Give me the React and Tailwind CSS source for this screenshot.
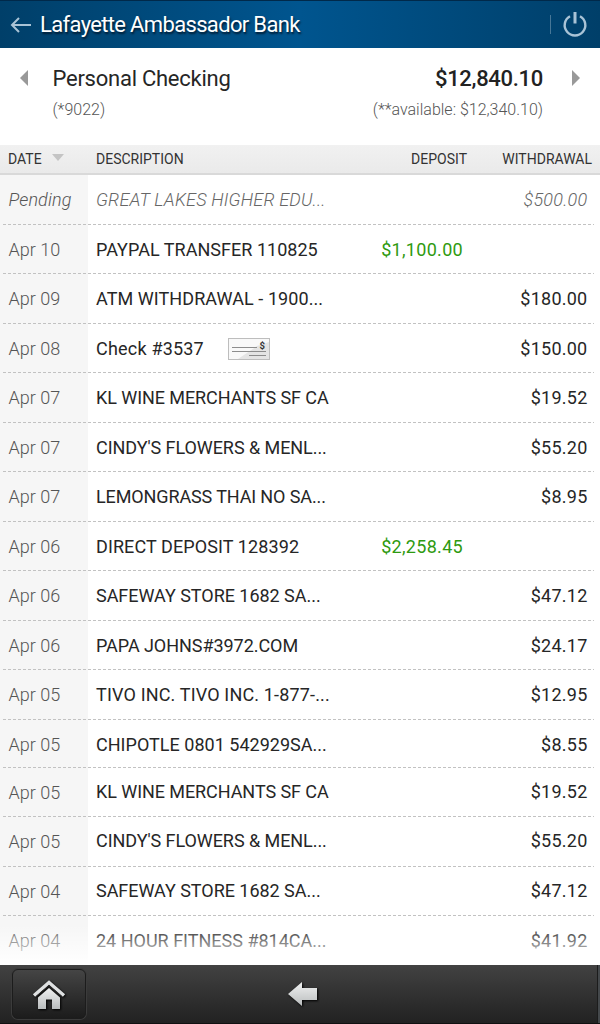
import React from "react";

const transactions = [
  { date: "Pending", text: "GREAT LAKES HIGHER EDU...", out: "$500.00", pending: true, ls: "tracking-[0.18px]" },
  { date: "Apr 10", text: "PAYPAL TRANSFER 110825", deposit: "$1,100.00", ls: "tracking-[0.03px]" },
  { date: "Apr 09", text: "ATM WITHDRAWAL - 1900...", out: "$180.00", ls: "tracking-[0.07px]" },
  { date: "Apr 08", text: "Check #3537", out: "$150.00", check: true, ls: "tracking-[0.2px]" },
  { date: "Apr 07", text: "KL WINE MERCHANTS SF CA", out: "$19.52", ls: "tracking-[-0.07px]" },
  { date: "Apr 07", text: "CINDY'S FLOWERS & MENL...", out: "$55.20", ls: "tracking-[-0.06px]" },
  { date: "Apr 07", text: "LEMONGRASS THAI NO SA...", out: "$8.95", ls: "tracking-[-0.12px]" },
  { date: "Apr 06", text: "DIRECT DEPOSIT 128392", deposit: "$2,258.45", ls: "tracking-[0.1px]" },
  { date: "Apr 06", text: "SAFEWAY STORE 1682 SA...", out: "$47.12", ls: "tracking-[-0.03px]" },
  { date: "Apr 06", text: "PAPA JOHNS#3972.COM", out: "$24.17", ls: "tracking-[-0.05px]" },
  { date: "Apr 05", text: "TIVO INC. TIVO INC. 1-877-...", out: "$12.95", ls: "tracking-[0.16px]" },
  { date: "Apr 05", text: "CHIPOTLE 0801 542929SA...", out: "$8.55", h: "h-[48.5px]", ls: "tracking-[0.02px]" },
  { date: "Apr 05", text: "KL WINE MERCHANTS SF CA", out: "$19.52", h: "h-[49px]", ls: "tracking-[-0.07px]", up: true },
  { date: "Apr 05", text: "CINDY'S FLOWERS & MENL...", out: "$55.20", ls: "tracking-[-0.06px]", up: true },
  { date: "Apr 04", text: "SAFEWAY STORE 1682 SA...", out: "$47.12", ls: "tracking-[-0.03px]", up: true },
  { date: "Apr 04", text: "24 HOUR FITNESS #814CA...", out: "$41.92", last: true, ls: "" },
];

function CheckIcon() {
  return (
    <svg width="44" height="24" viewBox="0 0 44 24" className="ml-[23px]">
      <rect x="1.5" y="1.5" width="41" height="21" fill="#f8f8f8" stroke="#bdbdbd" />
      <path d="M11 22L30 9L42 5V22Z" fill="#e4e4e4" />
      <path d="M5 10.5H30M5 14.5H39M22 18.5H39" stroke="#8c8c8c" />
      <text x="32.5" y="12" fontSize="9.5" fontWeight="700" fill="#333" fontFamily="Roboto">$</text>
    </svg>
  );
}

function Row({ t }) {
  const color = t.pending ? "italic font-light text-[#666]" : "text-[#262626]";
  const line = t.up ? "leading-[48px]" : "leading-[50px]";
  return (
    <div className={`relative flex shrink-0 text-[18px] whitespace-nowrap ${t.h || "h-[49.5px]"}`}>
      <div className={`w-[88px] bg-[#f6f6f6] pl-[8.5px] leading-[50px] font-light text-[#555] ${t.pending ? "italic tracking-[0.12px]" : ""}`}>
        {t.date}
      </div>
      <div className={`flex h-[50px] w-[270px] items-center pl-[8px] ${line} ${color}`}>
        <span className={t.up ? `-mt-[2px] ${t.ls}` : t.ls}>{t.text}</span>
        {t.check && <CheckIcon />}
      </div>
      <div className="w-[105px] text-right leading-[50px] tracking-[0.3px] text-[#2f9a10]">{t.deposit}</div>
      <div className={`w-[124.5px] text-right tracking-[0.25px] ${line} ${color}`}>{t.out}</div>
      {!t.last && (
        <div className="absolute bottom-0 left-[3px] h-px w-[591px] bg-[repeating-linear-gradient(90deg,#c2c2c2_0,#c2c2c2_3px,transparent_3px,transparent_5px)]" />
      )}
    </div>
  );
}

export default function App() {
  return (
    <div className="flex h-[1024px] w-[600px] flex-col overflow-hidden bg-white font-[Roboto,sans-serif]">
      <header className="flex h-[48px] shrink-0 items-center border-t border-[#00294a] bg-[linear-gradient(90deg,#003f69,#00558f_50%,#003f69)]">
        <svg width="22" height="18" viewBox="0 0 22 18" className="ml-[10px]" fill="none" stroke="#a9c3d6" strokeWidth="2">
          <path d="M9 2L2 9L9 16M2 9H21" />
        </svg>
        <h1 className="ml-[8px] text-[22px] tracking-[-0.66px] text-white [text-shadow:1px_2px_2px_#001c33]">Lafayette Ambassador Bank</h1>
        <div className="ml-auto h-[19px] w-px bg-[#477797]" />
        <svg width="26" height="28" viewBox="0 0 26 28" className="mr-[12px] ml-[11px]" fill="none" stroke="#a9c3d6" strokeWidth="2.4">
          <path d="M8 5.2A10.3 10.3 0 1 0 18 5.2" />
          <path d="M13 1V12.5" strokeWidth="3" />
        </svg>
      </header>

      <section className="flex h-[97px] shrink-0 pt-[17px]">
        <svg width="8" height="16" viewBox="0 0 8 16" className="mt-[5px] ml-[20px]">
          <path d="M8 0V16L0 8Z" fill="#999" />
        </svg>
        <div className="ml-[24.5px]">
          <div className="text-[22px] leading-[28px] tracking-[-0.25px] text-[#262626]">Personal Checking</div>
          <div className="mt-[7px] text-[16px] leading-[20px] font-light text-[#555]">(*9022)</div>
        </div>
        <div className="ml-auto text-right">
          <div className="text-[22px] leading-[28px] font-medium tracking-[-0.3px] text-[#222]">$12,840.10</div>
          <div className="mt-[7px] text-[16px] leading-[20px] font-light text-[#555]">(**available: $12,340.10)</div>
        </div>
        <svg width="8" height="16" viewBox="0 0 8 16" className="mt-[5px] mr-[20px] ml-[29px]">
          <path d="M0 0V16L8 8Z" fill="#999" />
        </svg>
      </section>

      <div className="flex h-[30px] shrink-0 items-center border-b-2 border-[#d9d9d9] bg-linear-to-b from-[#f1f1f1] to-[#eaeaea] text-[14px] leading-[28px] text-[#333]">
        <div className="flex w-[96px] items-center pl-[8px]">
          DATE
          <svg width="12" height="7" viewBox="0 0 12 7" className="-mt-[3px] ml-[10px]">
            <path d="M0 0H12L6 7Z" fill="#c4c4c4" />
          </svg>
        </div>
        <div className="w-[271px]">DESCRIPTION</div>
        <div className="w-[100px] text-right">DEPOSIT</div>
        <div className="w-[125px] text-right">WITHDRAWAL</div>
      </div>

      <main className="relative flex h-[790px] shrink-0 flex-col overflow-hidden">
        {transactions.map((t, i) => (
          <Row key={i} t={t} />
        ))}
        <div className="absolute inset-x-0 bottom-0 h-[40px] bg-linear-to-b from-white/0 to-white" />
      </main>

      <footer className="flex h-[59px] shrink-0 border-b border-[#111] bg-linear-to-b from-[#424242] to-[#222]">
        <button className="mt-[4px] ml-[12px] flex h-[50px] w-[74px] items-center justify-center rounded-[6px] border border-[#1c1c1c] bg-linear-to-b from-[#454545] to-[#1c1c1c] shadow-[0_0_0_1px_#3b3b3b]">
          <svg width="34" height="30" viewBox="0 0 34 30" className="mt-[2px] drop-shadow-[1px_1px_1px_#000]">
            <defs>
              <linearGradient id="metal" x1="0" y1="0" x2="0" y2="1">
                <stop offset="0" stopColor="#f0f1f1" />
                <stop offset="1" stopColor="#b9bcbd" />
              </linearGradient>
            </defs>
            <path d="M2 15.5L17 2.5L32 15.5" fill="none" stroke="#dfe1e2" strokeWidth="3.4" />
            <path d="M6 17.5L17 8L28 17.5V29H20V19.5H14V29H6Z" fill="url(#metal)" />
            <path d="M4 16.6L17 5.6L30 16.6" fill="none" stroke="#333" strokeWidth="0.9" />
          </svg>
        </button>
        <svg width="32" height="26" viewBox="0 0 32 26" className="mt-[17px] ml-[202px] drop-shadow-[1px_1px_1px_#000]">
          <path d="M0 12L14 0V6H29V18H14V24Z" fill="url(#metal)" />
        </svg>
        <div className="ml-auto w-[3px] border-l border-[#1c1c1c] bg-[#44484b]" />
      </footer>
    </div>
  );
}
